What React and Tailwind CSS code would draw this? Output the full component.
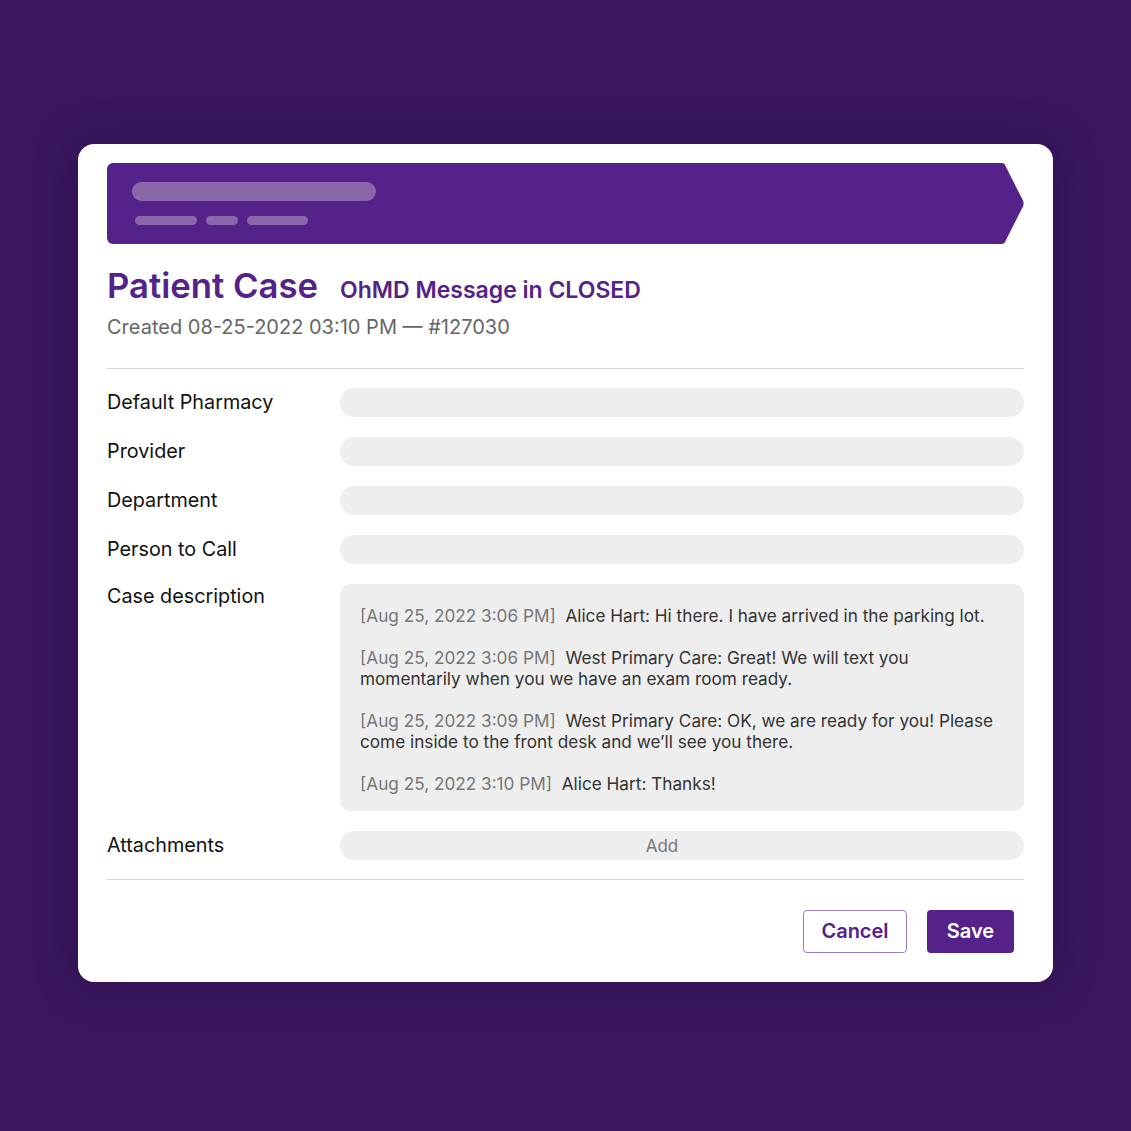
import React from 'react';

const fields = ['Default Pharmacy', 'Provider', 'Department', 'Person to Call'];

const messages = [
  { time: '[Aug 25, 2022 3:06 PM]', text: 'Alice Hart: Hi there. I have arrived in the parking lot.' },
  { time: '[Aug 25, 2022 3:06 PM]', text: 'West Primary Care: Great! We will text you momentarily when you we have an exam room ready.' },
  { time: '[Aug 25, 2022 3:09 PM]', text: 'West Primary Care: OK, we are ready for you! Please come inside to the front desk and we\u2019ll see you there.' },
  { time: '[Aug 25, 2022 3:10 PM]', text: 'Alice Hart: Thanks!' },
];

function Banner() {
  return (
    <div className="flex h-[81px]">
      <div className="flex-1 bg-[#55228a] rounded-l-[6px] pl-[25px] pt-[19px]">
        <div className="h-[19px] w-[244px] rounded-full bg-[#8a67ab]" />
        <div className="flex gap-[9px] mt-[15px] pl-[3px]">
          <div className="h-[9px] w-[62px] rounded-full bg-[#8a67ab]" />
          <div className="h-[9px] w-[32px] rounded-full bg-[#8a67ab]" />
          <div className="h-[9px] w-[61px] rounded-full bg-[#8a67ab]" />
        </div>
      </div>
      <svg width="23" height="81" viewBox="0 0 23 81" className="block">
        <path d="M0 0 H1 Q3.5 0 4.5 3 L22.2 38 Q23 40.5 22.2 43 L4.5 78 Q3.5 81 1 81 H0 Z" fill="#55228a" />
      </svg>
    </div>
  );
}

export default function App() {
  return (
    <div className="min-h-screen bg-[#3b1760] flex justify-center pt-[144px] pb-[149px] font-['Inter','Liberation_Sans',sans-serif]">
      <div className="w-[975px] bg-white rounded-[16px] shadow-[0_0_40px_rgba(20,5,35,0.35)] px-[29px] pt-[19px] pb-[29px]">
        <Banner />

        <div className="flex items-baseline gap-[22px] mt-[20px]">
          <h1 className="text-[34.7px] leading-[43px] font-semibold text-[#55228a]">Patient Case</h1>
          <span className="text-[23px] font-semibold text-[#55228a]">OhMD Message in CLOSED</span>
        </div>
        <div className="text-[20px] leading-[28px] text-[#666666] mt-[5px]">Created 08-25-2022 03:10 PM — #127030</div>

        <div className="h-px bg-[#d6d6d6] mt-[27px]" />

        <div className="grid grid-cols-[233px_1fr] gap-y-[20px] mt-[19px] items-center">
          {fields.map((f) => (
            <React.Fragment key={f}>
              <div className="text-[19.8px] leading-[24px] text-[#111111]">{f}</div>
              <div className="h-[29px] rounded-full bg-[#eeeeee]" />
            </React.Fragment>
          ))}

          <div className="self-start text-[19.8px] leading-[24px] text-[#111111]">Case description</div>
          <div className="rounded-[10px] bg-[#eeeeee] pl-[20px] pr-[24px] pt-[21px] pb-[17px] flex flex-col gap-[21px] text-[17.2px] leading-[21px]">
            {messages.map((m, i) => (
              <p key={i} className="text-[#333333]">
                <span className="text-[#777777]">{m.time}</span>
                {'\u00a0 '}
                {m.text}
              </p>
            ))}
          </div>

          <div className="text-[19.8px] leading-[24px] text-[#111111]">Attachments</div>
          <div className="h-[29px] rounded-full bg-[#eeeeee] flex items-center justify-center pt-[4px] pr-[40px] text-[17px] text-[#777777]">Add</div>
        </div>

        <div className="h-px bg-[#d6d6d6] mt-[19px]" />

        <div className="flex justify-end gap-[20px] mt-[30px] pr-[10px]">
          <button className="w-[104px] h-[43px] rounded-[4px] border border-[#9b7cbf] text-[20px] font-semibold text-[#55228a]">Cancel</button>
          <button className="w-[87px] h-[43px] rounded-[4px] bg-[#55228a] text-[20px] font-semibold text-white">Save</button>
        </div>
      </div>
    </div>
  );
}
